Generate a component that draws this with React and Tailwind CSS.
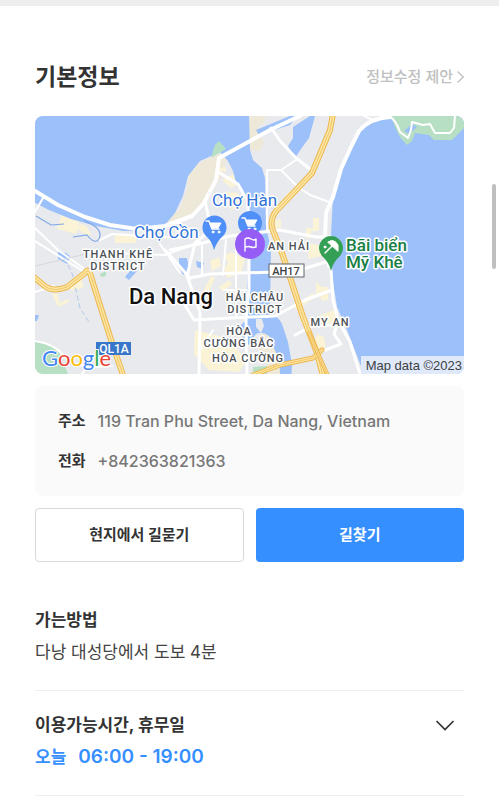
const halo = {
  paintOrder: "stroke",
  stroke: "#ffffff",
  strokeWidth: 3,
  strokeLinejoin: "round",
};

function Road({ d, w = 3, color = "#ffffff" }) {
  return <path d={d} fill="none" stroke={color} strokeWidth={w} strokeLinejoin="round" strokeLinecap="round" />;
}

function Highway({ d, w = 6 }) {
  return (
    <>
      <Road d={d} w={w} color="#eeb64e" />
      <Road d={d} w={w - 2} color="#fbe6a2" />
      <Road d={d} w={1} color="#f2c469" />
    </>
  );
}

function District({ x, y, size = 11, children }) {
  return (
    <text x={x} y={y} fontSize={size} textAnchor="middle" fontWeight="500" fill="#4d5156" letterSpacing="1" {...halo}>
      {children}
    </text>
  );
}

function Cart({ x, y }) {
  return (
    <g transform={`translate(${x} ${y})`} fill="none" stroke="#ffffff" strokeLinejoin="round" strokeLinecap="round">
      <path d="M-8-6h3l3 8h7" strokeWidth="1.4" />
      <path d="M-4-4h11l-3 5h-6z" fill="#ffffff" strokeWidth="1" />
      <circle cx="-1" cy="5" r="1" fill="#ffffff" strokeWidth="1" />
      <circle cx="5" cy="5" r="1" fill="#ffffff" strokeWidth="1" />
    </g>
  );
}

function CityMap() {
  return (
    <svg
      viewBox="35 116 429 258"
      role="img"
      aria-label="Da Nang"
      className="block h-auto w-full rounded-lg font-['Roboto','Noto_Sans',sans-serif]"
    >
      <rect x="35" y="116" width="429" height="258" fill="#e8eaed" />

      {/* sandy headland and built-up blocks */}
      <path d="M190 168L212 157 228 152 222 176 208 198 192 216 170 229 164 224 180 208 187 190z" fill="#eee8d8" />
      <path d="M248 116h17l-1 7-6 2 2 10 4 8-4 8-10-1z" fill="#eee8d8" />
      <path d="M264 327h9l12 24 2 23h-18l-4-12-12-20 8-7z" fill="#eee8d8" />
      <g fill="#fbf3d5">
        <path d="M63 210l18 6-5 18-19-5z" />
        <path d="M80 224l6 2 5 8-3 2-11-7z" />
        <path d="M219 168l7-1v5l-7-1zM222 180l12-6 6 10-9 4zM226 192l12 1 5 12-12 5z" />
        <path d="M115 235h21v8h-21zM144 232h11v7h-11zM67 285l14-8 3 10-12 4zM52 294l5-1 3 10 8-4 1 3-11 5z" />
        <path d="M224 255l7-3 14 7-4 14-14 5-3-9 4-6zM202 293l9-17 4 2-10 22zM219 287l10-7 3 4-9 8zM210 261l9-4 2 9-9 5z" />
        <path d="M195 330l32 8 20 22-8 12-30-2-15-16zM207 348l15 4 4 12-18 6z" />
        <path d="M313 218h6v13h-8v7h-5v-10h7zM284 197l7-7 2 3-7 8zM275 220l6-1v9h-6z" />
        <path d="M316 282l6 5 6 0v13l-6 1-2-5-4-2zM317 334l7 3 2 10-8 2-3-9zM319 316l15-6 5 11-13 3zM294 306l19-13 3 4-20 13z" />
        <path d="M307 243l12 2 3 11-13 3z" />
      </g>

      {/* water */}
      <g fill="#9cc0fa">
        <path d="M35 116h214l1 34 3 10 9 8 3 10 1 50 5 20-1 67q9 1 12 9l6 18 4 22-1 20h-10l-2-24-10-24q-8-6-14-1l-6 10-6-6-2-14 5-5v-20l3-43 1-45-2-14-11-12-4-15-5-10-8-9-20 9-12 15-5 20-8 17-10 12-12 5-29 1-28-5-25-7-22-9-21-11-6-4z" />
        <path d="M256 130l34-14h8l-8 9-31 10z" />
        <path d="M293 127l17-11h5l-6 22-8 11-6 9-7-12 5-8z" />
        <path d="M388 116h76v258H364l-17-44-10-23-6-37v-35l2-38 7-27 10-22 10-18 14-10z" />
        <path d="M58 252l8 1 4 3-3 8-9-5zM130 271h7l-8 9-4-3zM35 315h4l-2 6h-2zM179 258l8 0 2 11-6 6-4-9zM196 261l8 2-2 6-5-2z" />
      </g>
      <path d="M256 319l6 0 2 7-3 7-5-6z" fill="#e8eaed" />
      <g fill="none" stroke="#7fa8e8" strokeWidth="1.2">
        <path d="M36 216l15 9 13-1" />
        <path d="M73 237l14-2q8 10 12 4 4-9-8-15-8-3-6-6" />
        <path d="M68 265l4 8 8 35 9 14" stroke="#b3c8ec" strokeWidth="1" strokeDasharray="5 3" />
      </g>

      {/* parks */}
      <g fill="#b7dfc3">
        <path d="M211 158l4-13 4-4 7 8z" />
        <path d="M391 116h73v12l-12 12-18 0-5-5-14-2-3 8-5 4-7-8-5-10z" />
        <path d="M35 340l11 3 13 9 9 22H35zM100 274l6-3v5l-5 1zM253 367l14-1v8h-14z" />
      </g>
      <path d="M404 131l8-7 5 3-8 7z" fill="#9cc0fa" />

      {/* streets */}
      <Road d="M35 191L58 205 85 217 110 225 137 229 165 226 192 216" w={4} />
      <Road d="M192 216L204 203 216 180 219 158 270 130 300 116" w={4} />
      <Road d="M218 172L238 184 248 202 249 245 249 290 246 318 247 374" w={3} />
      <Road d="M205 200L211 230 195 243 187 276 200 312 199 374" w={3} />
      <Road d="M170 250L199 244 230 236 280 230 316 237 331 237" w={3} />
      <Road d="M35 241L86 273M43 198L35 212M35 292L54 286M100 240L112 234 180 238M86 252L165 255 200 242" w={2} />
      <Road d="M35 228L58 250 86 270M160 244L180 273" w={2} />
      <Road d="M165 250L190 278 210 274 275 272 300 270 332 260" w={3} />
      <Road d="M183 302L194 320 230 318 275 316 305 300 332 290" w={3} />
      <Road d="M202 246L202 275M226 240L223 275M213 330L199 352M236 240L236 318M224 290L247 290" w={2} />
      <Road d="M271 128L281 142 296 158 310 169" w={3} />
      <Road d="M296 160L281 170H267V230M281 170L298 187 310 195 329 202" w={2} />
      <Road d="M35 341Q55 344 64 356 Q75 370 112 366M95 355L82 374" w={2} />
      <Road d="M35 266L86 254" w={1} color="#d4d7dc" />
      <Road d="M331 270L333 300 338 320 350 342 360 374M295 335L312 326 334 325M320 352L341 344 334 334 338 321" w={3} />
      <Road d="M390 117Q370 118 359 131L351 147 341 169 333 197 326 213 325 238 329 266" w={4} />
      <Road d="M390 117Q396 120 400 132L408 138 411 130 412 122 423 125 430 124 435 133H450L454 128 455 116" w={2} />
      <Road d="M364 116L373 120" w={2} />

      {/* main roads */}
      <Highway d="M35 278L46 287Q54 292 67 287L85 273Q89 266 92 280L112 343 123 375" />
      <Highway d="M333 114L330 130 312 173 298 188 277 210Q270 218 272 228L282 253 303 317 317 353 323 376" />
      <Highway d="M253 375L280 365 313 358 322 350" w={5} />
      <Highway d="M309 333L328 376" w={4} />

      {/* shields */}
      <rect x="96" y="342" width="35" height="13" fill="#3876c9" />
      <text x="114" y="353" fontSize="12" fontWeight="500" textAnchor="middle" fill="#ffffff">QL1A</text>
      <rect x="269" y="264" width="35" height="13" fill="#ffffff" stroke="#5f6368" />
      <text x="286" y="275" fontSize="11" fontWeight="500" textAnchor="middle" fill="#3c4043">AH17</text>

      {/* place names */}
      <District x={118} y={258}>THANH KHÊ</District>
      <District x={118} y={270}>DISTRICT</District>
      <District x={289} y={250}>AN HẢI</District>
      <District x={255} y={301}>HẢI CHÂU</District>
      <District x={255} y={313}>DISTRICT</District>
      <District x={330} y={326}>MY AN</District>
      <District x={239} y={335}>HÒA</District>
      <District x={239} y={347}>CƯỜNG BẮC</District>
      <District x={248} y={362}>HÒA CƯỜNG</District>
      <text x="129" y="304" fontSize="22" fontWeight="500" fill="#111111" {...halo}>Da Nang</text>
      <text x="134" y="238" fontSize="17" fill="#2f73d8" {...halo}>Chợ Cồn</text>
      <text x="212" y="206" fontSize="17" fill="#2f73d8" {...halo}>Chợ Hàn</text>
      <text x="346" y="251" fontSize="17" fontWeight="500" fill="#188046" {...halo}>Bãi biển</text>
      <text x="346" y="268" fontSize="17" fontWeight="500" fill="#188046" {...halo}>Mỹ Khê</text>

      {/* pins */}
      <path d="M214 250Q212 241 206 236A12 12 0 1 1 223 236Q217 241 214 250z" fill="#4f8ff7" />
      <Cart x={214} y={227} />
      <circle cx="250" cy="223" r="12" fill="#4f8ff7" />
      <Cart x={250} y={224} />
      <circle cx="250" cy="244" r="15" fill="#955df5" />
      <path d="M245 251v-12q3-2 6 0t5 0v8q-3 1-5 0t-6 0" fill="none" stroke="#ffffff" strokeWidth="1.4" strokeLinejoin="round" strokeLinecap="round" />
      <path d="M331 271Q329 262 322 256A12 12 0 1 1 340 256Q333 262 331 271z" fill="#34a055" />
      <g stroke="#ffffff" fill="none" strokeWidth="1.5" strokeLinecap="round">
        <path d="M325 253l8-8" />
        <path d="M328 242q6-4 10 3v6z" fill="#ffffff" strokeWidth="1" />
        <circle cx="325" cy="247" r="1" fill="#ffffff" strokeWidth="1" />
      </g>

      {/* attribution */}
      <text x="42" y="366" fontSize="22" fontWeight="400" className="font-['Lato',sans-serif]" {...halo} strokeWidth="2">
        <tspan fill="#4285f4">G</tspan>
        <tspan fill="#ea4335">o</tspan>
        <tspan fill="#fbbc05">o</tspan>
        <tspan fill="#4285f4">g</tspan>
        <tspan fill="#34a853">l</tspan>
        <tspan fill="#ea4335">e</tspan>
      </text>
      <rect x="361" y="356" width="103" height="18" fill="#dfe9fa" />
      <text x="462" y="370" fontSize="13" textAnchor="end" fill="#3c4043" className="font-['Liberation_Sans',sans-serif]">Map data ©2023</text>
    </svg>
  );
}

export default function App() {
  return (
    <div className="relative bg-white font-['Inter','Noto_Sans_CJK_KR',sans-serif] text-[#333333]">
      <div className="h-1.5 bg-[#eeeeee]" />
      <div aria-hidden="true" className="absolute top-46 right-[3px] h-[85px] w-1 rounded-full bg-[#bfbfbf]" />

      <main className="px-[35px]">
        <header className="flex items-center justify-between pt-[55px] pb-[23px]">
          <h1 className="text-[23px] leading-8 font-bold">기본정보</h1>
          <a href="#suggest" className="flex items-center gap-1 text-[15px] leading-6 font-medium text-[#c0c0c0]">
            정보수정 제안
            <svg viewBox="0 0 7 12" className="h-3 w-[7px]" fill="none" stroke="currentColor" strokeWidth="1.3">
              <path d="M.5.5L6.3 6 .5 11.5" />
            </svg>
          </a>
        </header>

        <CityMap />

        <dl className="mt-3 flex flex-col gap-4 rounded-lg bg-[#fafafa] px-[23px] py-[23px] leading-6">
          <div className="flex gap-3">
            <dt className="text-[15px] font-bold">주소</dt>
            <dd className="text-[16px] font-medium text-[#777777]">119 Tran Phu Street, Da Nang, Vietnam</dd>
          </div>
          <div className="flex gap-3">
            <dt className="text-[15px] font-bold">전화</dt>
            <dd className="text-[16px] font-medium text-[#777777]">+842363821363</dd>
          </div>
        </dl>

        <div className="mt-3 grid grid-cols-2 gap-3 text-[15px] font-bold">
          <button type="button" className="h-[54px] rounded border border-[#d9d9d9] bg-white">현지에서 길묻기</button>
          <button type="button" className="h-[54px] rounded bg-[#368fff] text-white">길찾기</button>
        </div>

        <section className="border-b border-[#eeeeee] pt-[42px] pb-[22px] text-[17px] leading-8">
          <h2 className="font-bold">가는방법</h2>
          <p className="text-[#444444]">다낭 대성당에서 도보 4분</p>
        </section>

        <section className="border-b border-[#eeeeee] pt-[18px] pb-[22px] text-[17px] leading-8">
          <div className="flex items-center justify-between">
            <h2 className="font-bold">이용가능시간, 휴무일</h2>
            <button type="button" aria-label="펼치기" className="mr-[9px]">
              <svg viewBox="0 0 20 11" className="h-[11px] w-5" fill="none" stroke="currentColor" strokeWidth="1.7">
                <path d="M1.5 1L10 9.5 18.5 1" />
              </svg>
            </button>
          </div>
          <p className="flex gap-3 font-semibold text-[#368fff]">
            <span>오늘</span>
            <span className="text-[19px]">06:00 - 19:00</span>
          </p>
        </section>
      </main>
    </div>
  );
}
